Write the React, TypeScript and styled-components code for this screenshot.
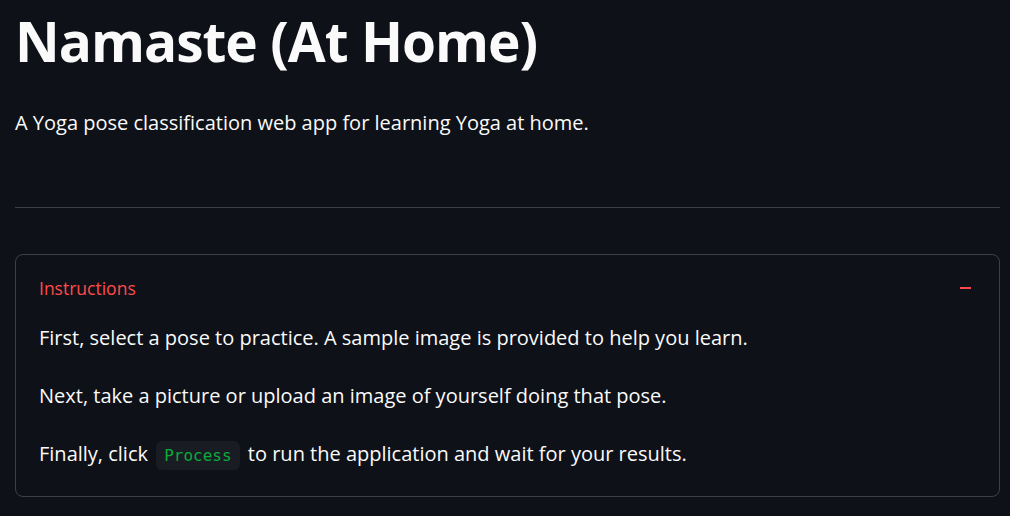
import React from "react";
import styled, { createGlobalStyle } from "styled-components";

const GlobalStyle = createGlobalStyle`
    html, body {
        margin: 0;
        padding: 0;
        background: #0e1117;
    }
    body {
        font-family: "Open Sans", "Noto Sans", sans-serif;
        color: #fafafa;
    }
`;

const Main = styled.main`
    width: 1010px;
    height: 516px;
    box-sizing: border-box;
    padding: 7px 10px 0 15px;
    overflow: hidden;
    background: #0e1117;
`;

const Title = styled.h1`
    margin: 0;
    font-size: 55px;
    line-height: 67px;
    font-weight: 700;
    letter-spacing: -1px;
    color: #fafafa;
`;

const Lead = styled.p`
    margin: 35px 0 0;
    font-size: 20px;
    line-height: 28px;
    color: #fafafa;
`;

const Divider = styled.hr`
    margin: 70px 0 0;
    border: none;
    border-top: 1px solid rgba(250, 250, 250, 0.2);
    height: 0;
`;

const Expander = styled.section`
    margin-top: 46px;
    border: 1px solid rgba(250, 250, 250, 0.2);
    border-radius: 8px;
    height: 243px;
    box-sizing: border-box;
`;

const Summary = styled.div`
    display: flex;
    align-items: center;
    justify-content: space-between;
    padding: 19px 28px 0 23px;
    height: 28px;
    color: #ff4b4b;
    font-size: 17.5px;
`;

const Minus = styled.span`
    width: 11px;
    height: 2px;
    background: #ff4b4b;
`;

const Body = styled.div`
    padding: 22px 23px 0;
    display: flex;
    flex-direction: column;
    gap: 30px;
`;

const Line = styled.p`
    margin: 0;
    font-size: 20px;
    line-height: 28px;
    color: #fafafa;
`;

const Code = styled.code`
    font-family: "DejaVu Sans Mono", "Liberation Mono", monospace;
    font-size: 16px;
    color: #09ab3b;
    background: #1a1c24;
    border-radius: 6px;
    padding: 5px 8px;
    margin: 0 3px;
`;

const instructions = [
    "First, select a pose to practice. A sample image is provided to help you learn.",
    "Next, take a picture or upload an image of yourself doing that pose.",
];

export default function App() {
    return (
        <>
            <GlobalStyle />
            <Main>
                <Title>Namaste (At Home)</Title>
                <Lead>A Yoga pose classification web app for learning Yoga at home.</Lead>
                <Divider />
                <Expander>
                    <Summary>
                        <span>Instructions</span>
                        <Minus />
                    </Summary>
                    <Body>
                        {instructions.map((text, i) => (
                            <Line key={i}>{text}</Line>
                        ))}
                        <Line>
                            Finally, click <Code>Process</Code> to run the application and wait for your results.
                        </Line>
                    </Body>
                </Expander>
            </Main>
        </>
    );
}
